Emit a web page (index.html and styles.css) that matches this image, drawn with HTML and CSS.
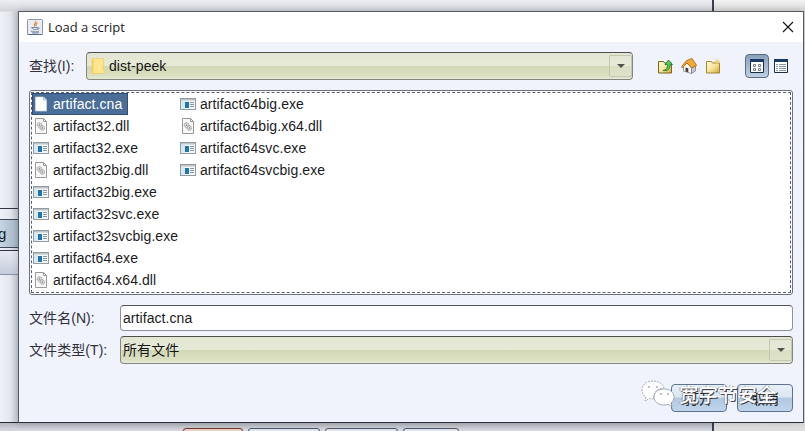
FILE: index.html
```html
<!DOCTYPE html>
<html lang="zh-CN">
<head>
<meta charset="utf-8">
<title>Load a script</title>
<link rel="stylesheet" href="styles.css">
</head>
<body>
<svg class="defs" width="0" height="0">
  <defs>
    <linearGradient id="fold" x1="0" y1="0" x2="1" y2="1"><stop offset="0" stop-color="#fffbe0"/><stop offset=".5" stop-color="#f7e59c"/><stop offset="1" stop-color="#cfa63a"/></linearGradient>
    <symbol id="exe" viewBox="0 0 16 16"><rect x=".5" y="2.500" width="15" height="11" fill="#f4f7f9" stroke="#929ba1"/><rect x="1" y="3" width="14" height="1.500" fill="#bcc3c7"/><rect x="1" y="5" width="4" height="8" fill="#d7eaf3"/><rect x="5" y="6" width="4" height="6" fill="#2274ae"/><path d="M10 6.500h4M10 8.500h4M10 10.500h4" stroke="#8a969d"/></symbol>
    <symbol id="dll" viewBox="0 0 16 16"><path d="M2.500.5h8l3 3v12h-11zM10.500.5v3h3" fill="#f8f8f8" stroke="#999"/><circle cx="6.500" cy="7" r="2.300" fill="#ddd" stroke="#929292" stroke-dasharray="1.300 .5"/><circle cx="9.300" cy="10" r="2.300" fill="#ddd" stroke="#929292" stroke-dasharray="1.300 .5"/><circle cx="6.500" cy="7" r=".7" fill="#777"/><circle cx="9.300" cy="10" r=".7" fill="#777"/></symbol>
    <symbol id="doc" viewBox="0 0 16 16"><path d="M2.500 1h8l3 3v11h-11z" fill="#fff" stroke="#d3dbe3" stroke-width=".7"/><path d="M10.500 1v3h3" fill="#dce4ed" stroke="#9fb0c3" stroke-width=".7"/></symbol>
  </defs>
</svg>
<div class="back">
  <div class="pane"></div>
  <div class="tabs"><div class="tab">g</div></div>
  <div class="head"></div>
  <div class="content"></div>
  <div class="strip"><i class="hot"></i><i class="b2"></i><i class="b3"></i><i class="b4"></i></div>
</div>
<main class="dialog">
  <header>
    <svg class="java" viewBox="0 0 16 16"><rect x=".5" y=".5" width="15" height="15" rx="1" fill="#e9edf2" stroke="#8c98a8"/><path d="M.5 15.500h15" stroke="#596b86"/><path d="M8.500 2c2 2-3 2.500-.5 5.500M10.500 4c-2 1-2 1.500-.8 3" fill="none" stroke="#df8744" stroke-width="1.200"/><path d="M4.500 8.500h6c0 3-5 3-5.500 0M11 8.500c2 .2 1 2-1 2M4 12c2 1.300 6 1.300 8 0M5 13.800c2 .5 5 .4 7-.3" fill="none" stroke="#617b98" stroke-width=".9"/></svg>
    <h1>Load a script</h1>
    <svg class="close" viewBox="0 0 12 12"><path d="M1 1l10 10M11 1L1 11" stroke="#111" stroke-width="1.100"/></svg>
  </header>
  <section class="look">
    <label>查找(I):</label>
    <div class="combo place">
      <svg class="folder" viewBox="0 0 14 18"><path d="M1 1.500h11.500v11h.8v4H1z" fill="#ffe58e" stroke="#edcb65" stroke-width=".7"/><path d="M1 1.500l1.500 1v15L1 16z" fill="#f6cd5d"/></svg>
      <span>dist-peek</span><b class="arrow"></b>
    </div>
    <nav>
      <svg viewBox="0 0 16 16"><path d="M1.500 3.500h5l1 1.500h7v10h-13z" fill="url(#fold)" stroke="#7d6516"/><path d="M6 12.500c3.500-.5 4.500-2.500 4.500-6H8L11.500 2l4 4.500h-2.300c0 4.500-2 6.500-7.200 6z" fill="#55c956" stroke="#16732a" stroke-width=".8"/></svg>
      <svg viewBox="0 0 16 16"><path d="M2.500 8.500L6 5l4.500 5v5.500L2.500 13z" fill="#fff" stroke="#777" stroke-width=".7"/><path d="M10.500 9.500l4-1.500v5l-4 2.500z" fill="#c6c9cd" stroke="#777" stroke-width=".7"/><path d="M.5 8.800L5.500 2.500 11 .5l4.700 7-5 2.500L6 5 1.500 10z" fill="#f0aa35" stroke="#9c6114" stroke-width=".8"/><path d="M4.500 9.500l2.800.8v4l-2.800-.9z" fill="#4a3b38"/></svg>
      <svg viewBox="0 0 16 16"><path d="M1.500 3.500h5l1 1.500h7v10h-13z" fill="url(#fold)" stroke="#9a7a20" stroke-width=".9"/><path d="M12 .5v6M9 3.500h6M10 1.500l4 4M14 1.500l-4 4" stroke="#f0d268" stroke-width=".8"/></svg>
      <button class="toggle" aria-label="列表"><svg viewBox="0 0 14 14"><path d="M.5.500h13v13H.5z" fill="#fff" stroke="#173045"/><path d="M0 1.500h14" stroke="#183a68" stroke-width="3"/><path d="M3.500 5.500h2v2h-2zM8.500 5.500h2v2h-2zM3.500 9.500h2v2h-2zM8.500 9.500h2v2h-2z" fill="none" stroke="#5a6068" stroke-width=".8"/></svg></button>
      <svg class="details" viewBox="0 0 14 14"><path d="M.5.500h13v13H.5z" fill="#fff" stroke="#173045"/><path d="M0 1.500h14" stroke="#183a68" stroke-width="3"/><path d="M2 5.500h2M5 5.500h7M2 7.500h2M5 7.500h7M2 9.500h2M5 9.500h7M2 11.500h2M5 11.500h7" stroke="#657c91" stroke-width=".8"/></svg>
    </nav>
  </section>
  <section class="files">
    <ul>
      <li class="selected"><svg><use href="#doc"/></svg><span>artifact.cna</span></li>
      <li><svg><use href="#dll"/></svg><span>artifact32.dll</span></li>
      <li><svg><use href="#exe"/></svg><span>artifact32.exe</span></li>
      <li><svg><use href="#dll"/></svg><span>artifact32big.dll</span></li>
      <li><svg><use href="#exe"/></svg><span>artifact32big.exe</span></li>
      <li><svg><use href="#exe"/></svg><span>artifact32svc.exe</span></li>
      <li><svg><use href="#exe"/></svg><span>artifact32svcbig.exe</span></li>
      <li><svg><use href="#exe"/></svg><span>artifact64.exe</span></li>
      <li><svg><use href="#dll"/></svg><span>artifact64.x64.dll</span></li>
    </ul>
    <ul>
      <li><svg><use href="#exe"/></svg><span>artifact64big.exe</span></li>
      <li><svg><use href="#dll"/></svg><span>artifact64big.x64.dll</span></li>
      <li><svg><use href="#exe"/></svg><span>artifact64svc.exe</span></li>
      <li><svg><use href="#exe"/></svg><span>artifact64svcbig.exe</span></li>
    </ul>
  </section>
  <section class="row name"><label>文件名(N):</label><div class="input">artifact.cna</div></section>
  <section class="row type"><label>文件类型(T):</label><div class="combo"><span>所有文件</span><b class="arrow"></b></div></section>
  <footer><button>打开</button><button>取消</button></footer>
  <div class="brand">
    <svg viewBox="0 0 34 28"><path d="M12 1C5 1 1 5 1 10c0 3 1.500 5.500 4 7l-1 4 4.500-2.500c1 .3 3 .5 4.500.3C12 12 17 8 23 8c-1-4-5-7-11-7z" fill="#fff" stroke="#9297a3" stroke-width=".8" stroke-dasharray="2 1"/><path d="M23 9c-6 0-10 3.500-10 8s4 8 10 8c1.500 0 3-.3 4-.6l4 2-1-3.500c2-1.500 3-3.500 3-6 0-4.500-4-7.900-10-7.900z" fill="#fff" stroke="#9297a3" stroke-width=".8"/><g fill="#a8adb7"><circle cx="8" cy="7" r="1"/><circle cx="16" cy="7" r="1"/><circle cx="20" cy="14" r="1"/><circle cx="27" cy="14" r="1"/></g></svg>
    <span>宽字节安全</span>
  </div>
</main>
</body>
</html>
```

FILE: styles.css
```css
* { box-sizing: border-box; }
body { margin: 0; width: 805px; height: 431px; overflow: hidden; position: relative; background: linear-gradient(#f2f2f2, #d9d9d9 11px, #e8e8e8 400px, #dedede); font: 14px "Liberation Sans", "Noto Sans CJK SC", sans-serif; letter-spacing: .07px; color: #1b1b1e; }
.defs { position: absolute; }
svg { display: block; flex: none; }
.back { width: 714px; height: 431px; border-right: 2px solid #3c3f48; background: linear-gradient(90deg, #eff0f8, #e4e6ee 10px, #c5c9d1 18px); display: flex; flex-direction: column; }
.pane { height: 209px; border-bottom: 1px solid #303643; background: linear-gradient(#eeeff5, #d2d4da 11px, transparent 12px); }
.tabs { height: 41px; padding-top: 10px; }
.tab { width: 19px; height: 29px; line-height: 28px; border: 1px solid #3f4854; border-width: 1px 0; background: linear-gradient(90deg, #c4d5e4, #a4b3c0); font-size: 15px; text-indent: -2px; }
.head { height: 25px; border-top: 1px solid #303643; border-bottom: 1px solid #8793aa; background: linear-gradient(#e6eaf2, #c5ccda); }
.content { height: 148px; border-bottom: 1px solid #262a33; }
.strip { height: 8px; padding: 5px 0 0 183px; display: flex; gap: 5px; background: linear-gradient(#b2b5bc, #d7dae2); }
.strip i { height: 10px; border: 1px solid #4b5767; border-radius: 3px 3px 0 0; background: #dfe4ed; }
.strip .hot { width: 60px; border-color: #6a3730; background: #f2cdc2; }
.strip .b2 { width: 72px; }
.strip .b3 { width: 73px; }
.strip .b4 { width: 56px; }
.dialog { position: absolute; left: 18px; top: 11px; width: 786px; height: 412px; border: 1px solid #555b63; border-bottom-color: #292e3a; background: #f0f3fc; box-shadow: 0 0 7px #0003; display: flex; flex-direction: column; }
header { height: 30px; flex: none; background: #fff; display: flex; align-items: center; padding: 0 9px 0 8px; }
.java { width: 16px; height: 16px; }
h1 { margin: -1px 0 0 5px; font: 13px "Open Sans", sans-serif; letter-spacing: -.05px; flex: 1; }
.close { width: 12px; height: 12px; }
.look { height: 48px; flex: none; display: flex; align-items: center; padding: 0 10px; }
label { white-space: nowrap; font-size: 14px; color: #303039; position: relative; top: -1px; }
.look label { width: 57px; }
.combo { height: 28px; border: 1px solid #84877e; border-top-color: #4d5048; border-radius: 4px; background: linear-gradient(#e3e5d3, #e8ead8 50%, #d2d8b6 51%, #dadfc1 85%, #e6e9d4); display: flex; align-items: center; color: #161616; }
.place { width: 547px; padding-left: 4px; }
.folder { width: 14px; height: 18px; margin-right: 4px; }
.combo span { flex: 1; }
.arrow { width: 23px; height: 22px; border: 1px solid #c3c8b3; border-radius: 0 2px 2px 0; display: grid; place-items: center; background: #e6e9d866; }
.arrow::after { content: ""; border: 4px solid transparent; border-top-color: #51544a; border-bottom: 0; }
nav { display: flex; align-items: center; margin-left: 24px; }
nav > svg { width: 16px; height: 16px; margin-right: 8px; }
.toggle { width: 24px; height: 24px; padding: 4px; margin-left: 16px; margin-right: 5px; border: 1px solid #576b84; border-radius: 4px; background: linear-gradient(#8ba1bb, #bfd0e3); }
.toggle svg, nav > .details { width: 14px; height: 14px; margin: 0; }
.files { height: 205px; width: 764px; flex: none; margin-left: 10px; border: 1px solid #67717f; border-radius: 3px; outline: 1px dashed #5c626d; outline-offset: -3px; background: #fff; display: flex; padding: 2px; }
ul { list-style: none; margin: 0; padding: 0; width: 147px; flex: none; }
li { height: 22px; width: max-content; display: flex; align-items: center; gap: 4px; padding: 0 5px 0 1px; white-space: nowrap; }
li svg { width: 16px; height: 16px; }
.selected { width: 96px; background: #4b6e98; color: #fff; border: 1px solid #304f76; padding: 0 3px 0 0; }
.row { display: flex; align-items: center; flex: none; margin-left: 10px; width: 764px; }
.row label { width: 91px; }
.name { margin-top: 10px; height: 26px; }
.type { margin-top: 5px; height: 28px; }
.input, .row .combo { flex: 1; }
.input { height: 26px; line-height: 24px; border: 1px solid #8e939b; border-top-color: #50555c; border-radius: 4px; padding-left: 2px; background: #fff; }
.row .combo { padding-left: 2px; }
.row .combo span { margin-top: -2px; }
footer { display: flex; justify-content: flex-end; gap: 10px; margin: 20px 10px 0; }
footer button { width: 56px; height: 28px; padding: 0; border: 1px solid #5e7390; border-radius: 4px; background: linear-gradient(#e8eff7, #dce6f1 47%, #b1c8e1 50%, #bfd5ed); font: 14px "Noto Sans CJK SC", sans-serif; color: #222; }
.brand { position: absolute; left: 622px; top: 368px; display: flex; align-items: center; gap: 4px; font: 500 19.500px/28px "Noto Sans CJK SC", sans-serif; letter-spacing: 0; color: #fff; text-shadow: 1px 1px 0 #444, -0.500px 0 1px #777; white-space: nowrap; }
.brand svg { width: 34px; height: 28px; }
```
